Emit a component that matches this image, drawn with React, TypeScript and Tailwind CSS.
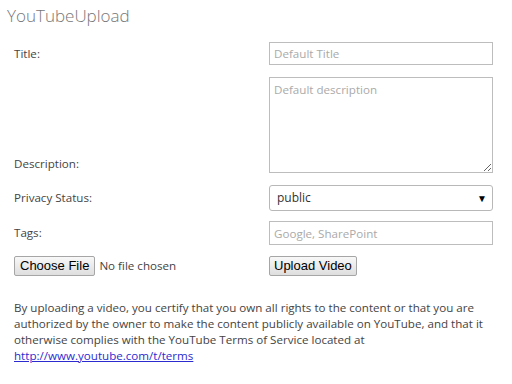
import React from 'react';

const font = { fontFamily: '"Open Sans", "Noto Sans", sans-serif' };
const btnFont = { fontFamily: '"Liberation Sans", Arial, sans-serif' };

function Row({ label, align = 'items-center', className = '', children }: {
  label: React.ReactNode;
  align?: string;
  className?: string;
  children: React.ReactNode;
}) {
  return (
    <div className={`flex ${className}`}>
      <div className={`flex w-[255px] ${align}`}>{label}</div>
      <div className="flex w-[224px]">{children}</div>
    </div>
  );
}

function FieldLabel({ children }: { children: React.ReactNode }) {
  return <label className="text-[11.6px] leading-[16px] text-[#444]">{children}</label>;
}

export default function App() {
  return (
    <div className="w-[512px] h-[384px] overflow-hidden bg-white" style={font}>
      <h1 className="pl-[7px] pt-[4px] text-[17px] leading-[24px] font-light text-[#777]">YouTubeUpload</h1>

      <form className="ml-[14px] mt-[14px] w-[479px]">
        <Row label={<FieldLabel>Title:</FieldLabel>}>
          <input
            placeholder="Default Title"
            className="h-[23px] w-[224px] border border-[#bdbdbd] px-[4px] text-[11.6px] text-[#333] placeholder:text-[#aaa] outline-none"
          />
        </Row>

        <Row label={<FieldLabel>Description:</FieldLabel>} align="items-end pb-[1px]" className="mt-[12px]">
          <textarea
            placeholder="Default description"
            className="block h-[96px] w-[224px] border border-[#bdbdbd] px-[4px] py-[3px] text-[11.6px] text-[#333] placeholder:text-[#aaa] outline-none"
          />
        </Row>

        <Row label={<FieldLabel>Privacy Status:</FieldLabel>} className="mt-[12px]">
          <div className="relative h-[26px] w-[224px] rounded-[3px] border border-[#b8b8b8] bg-white">
            <span className="absolute left-[7px] top-[4px] text-[12px] leading-[16px] text-[#333]">public</span>
            <span className="absolute right-[5px] top-[5px] text-[10px] leading-[14px] text-black">▼</span>
          </div>
        </Row>

        <Row label={<FieldLabel>Tags:</FieldLabel>} className="mt-[10px]">
          <input
            placeholder="Google, SharePoint"
            className="h-[24px] w-[224px] border border-[#bdbdbd] px-[4px] text-[11.6px] text-[#333] placeholder:text-[#aaa] outline-none"
          />
        </Row>

        <Row
          className="mt-[11px]"
          label={
            <div className="flex items-center gap-[4px]">
              <button
                type="button"
                className="h-[20px] rounded-[2px] border border-[#a6a6a6] bg-gradient-to-b from-[#f8f8f8] to-[#dedede] px-[5px] text-[13px] leading-[16px] text-black"
                style={btnFont}
              >
                Choose File
              </button>
              <span className="text-[11.6px] leading-[16px] text-[#444]">No file chosen</span>
            </div>
          }
        >
          <button
            type="button"
            className="h-[20px] rounded-[2px] border border-[#a6a6a6] bg-gradient-to-b from-[#f8f8f8] to-[#dedede] px-[4px] text-[13px] leading-[16px] text-black"
            style={btnFont}
          >
            Upload Video
          </button>
        </Row>

        <p className="mt-[24px] whitespace-nowrap text-[11.6px] leading-[16px] text-[#444]">
          By uploading a video, you certify that you own all rights to the content or that you are
          <br />
          authorized by the owner to make the content publicly available on YouTube, and that it
          <br />
          otherwise complies with the YouTube Terms of Service located at
          <br />
          <a href="#" className="text-[#2b2bd0] underline">http://www.youtube.com/t/terms</a>
        </p>
      </form>
    </div>
  );
}
